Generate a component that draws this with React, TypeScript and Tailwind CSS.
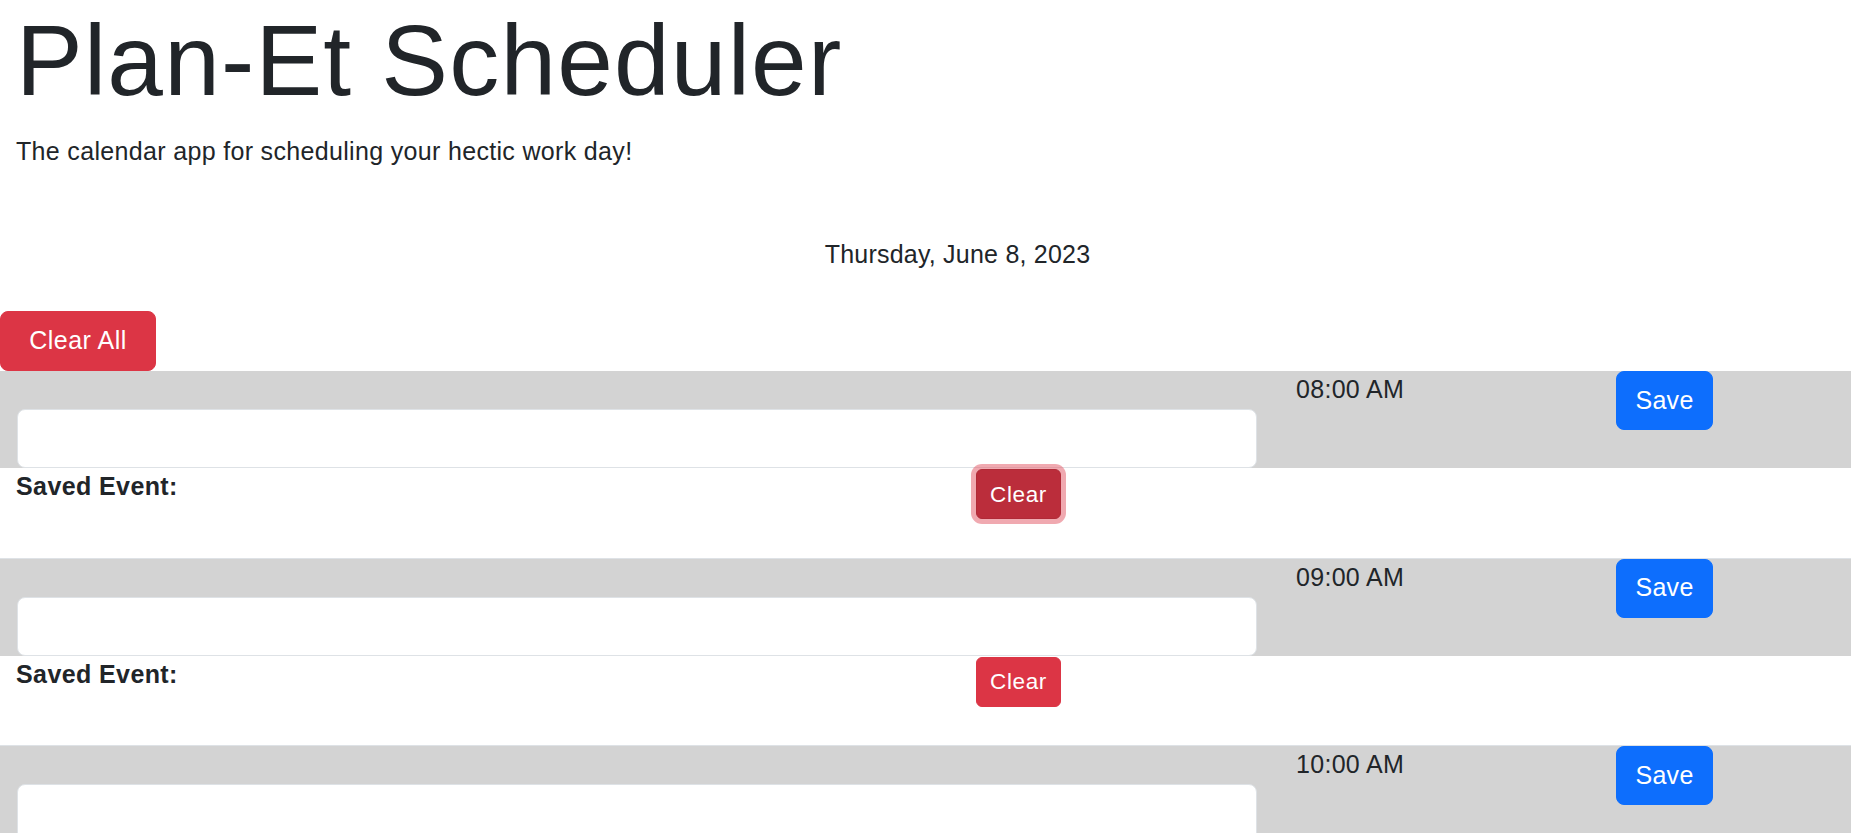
import React from "react";

const hours = [
  "08:00 AM",
  "09:00 AM",
  "10:00 AM",
  "11:00 AM",
  "12:00 PM",
  "01:00 PM",
  "02:00 PM",
  "03:00 PM",
  "04:00 PM",
  "05:00 PM",
];

function TimeBlock({ label, focused }: { label: string; focused: boolean }) {
  return (
    <div>
      <div className="flex h-[97px] items-start bg-[#d3d3d3]">
        <div className="w-[1257px] shrink-0 pl-[17px] pt-[38px]">
          <input
            type="text"
            className="block h-[59px] w-full rounded-[8px] border border-[#dee2e6] bg-white px-4 text-[25px] outline-none"
          />
        </div>
        <div className="w-[359px] shrink-0 pl-[39px] text-[25px] leading-[37.5px] tracking-[0.3px] text-[#212529]">
          {label}
        </div>
        <button className="h-[59px] w-[97px] shrink-0 rounded-[8px] border border-[#0d6efd] bg-[#0d6efd] text-[25px] leading-[37.5px] tracking-[0.3px] text-white">
          Save
        </button>
      </div>
      <div className="flex h-[90.5px] items-start border-b border-[#dee2e6] bg-white">
        <div className="w-[976px] shrink-0 pl-[16px] text-[25px] font-bold leading-[37.5px] tracking-[0.4px] text-[#212529]">
          Saved Event:
        </div>
        <button
          className={
            focused
              ? "mt-[1px] h-[50px] w-[85px] shrink-0 rounded-[6px] border border-[#b02a37] bg-[#bb2d3b] text-[22.5px] leading-[33px] tracking-[0.6px] text-white shadow-[0_0_0_5px_rgba(225,83,97,0.5)]"
              : "mt-[1px] h-[50px] w-[85px] shrink-0 rounded-[6px] border border-[#dc3545] bg-[#dc3545] text-[22.5px] leading-[33px] tracking-[0.6px] text-white"
          }
        >
          Clear
        </button>
      </div>
    </div>
  );
}

export default function App() {
  return (
    <div
      className="min-h-screen bg-white text-[#212529]"
      style={{ fontFamily: '"Liberation Sans", Arial, sans-serif' }}
    >
      <header>
        <h1 className="pl-[16px] text-[100px] font-light leading-[120px] tracking-[1.2px] text-[#212529]">
          Plan-Et Scheduler
        </h1>
        <p className="mt-[13px] pl-[16px] text-[25px] font-light leading-[37.5px] tracking-[0.33px]">
          The calendar app for scheduling your hectic work day!
        </p>
        <p className="mt-[65px] pl-[64px] text-center text-[25px] leading-[37.5px] tracking-[0.22px]">
          Thursday, June 8, 2023
        </p>
      </header>
      <div className="mt-[38px]">
        <button className="h-[60px] w-[156px] rounded-[8px] border border-[#dc3545] bg-[#dc3545] text-[25px] leading-[37.5px] tracking-[0.5px] text-white">
          Clear All
        </button>
      </div>
      <main>
        {hours.map((h, i) => (
          <TimeBlock key={h} label={h} focused={i === 0} />
        ))}
      </main>
    </div>
  );
}
